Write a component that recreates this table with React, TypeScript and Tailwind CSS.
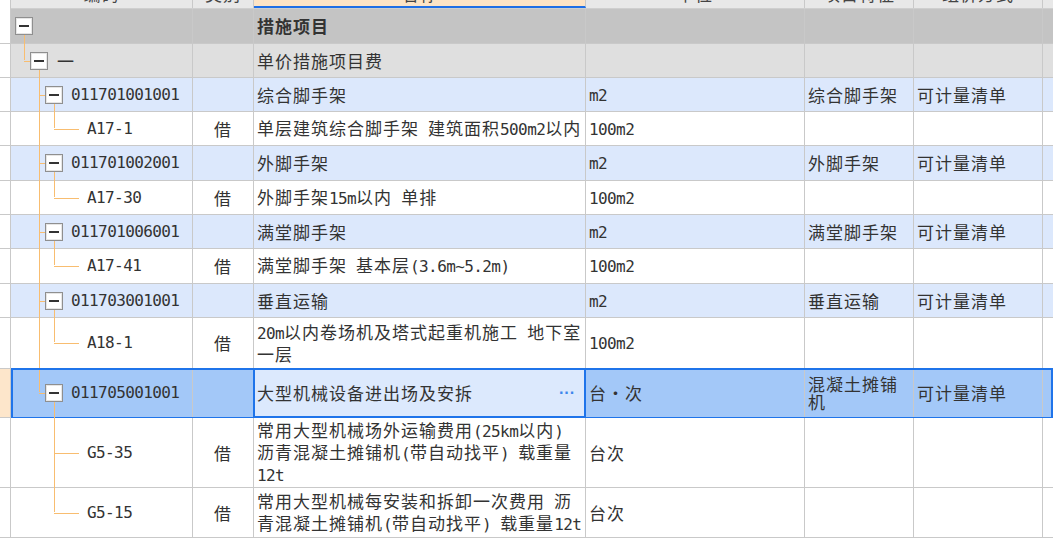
import React from "react"

type Row = {
  level: 0 | 1 | 2 | 3
  code: string
  kind?: string
  name: string[]
  unit?: string
  feature?: string[]
  method?: string
  h: string
  bg: string
  bold?: boolean
  selected?: boolean
  trunk?: "full" | "half" | "from-box"
  root?: "from-box" | "half"
  branch?: "from-box" | "half" | "full"
}

const rows: Row[] = [
  { level: 0, code: "", name: ["措施项目"], h: "h-[35px]", bg: "bg-[#c4c4c4]", bold: true, root: "from-box" },
  { level: 1, code: "一", name: ["单价措施项目费"], h: "h-[34px]", bg: "bg-[#dfdfdf]", root: "half", trunk: "from-box" },
  { level: 2, code: "011701001001", name: ["综合脚手架"], unit: "m2", feature: ["综合脚手架"], method: "可计量清单", h: "h-[34px]", bg: "bg-[#dce8fc]", trunk: "full", branch: "from-box" },
  { level: 3, code: "A17-1", kind: "借", name: ["单层建筑综合脚手架 建筑面积500m2以内"], unit: "100m2", h: "h-[34px]", bg: "bg-white", trunk: "full", branch: "half" },
  { level: 2, code: "011701002001", name: ["外脚手架"], unit: "m2", feature: ["外脚手架"], method: "可计量清单", h: "h-[35px]", bg: "bg-[#dce8fc]", trunk: "full", branch: "from-box" },
  { level: 3, code: "A17-30", kind: "借", name: ["外脚手架15m以内 单排"], unit: "100m2", h: "h-[34px]", bg: "bg-white", trunk: "full", branch: "half" },
  { level: 2, code: "011701006001", name: ["满堂脚手架"], unit: "m2", feature: ["满堂脚手架"], method: "可计量清单", h: "h-[34px]", bg: "bg-[#dce8fc]", trunk: "full", branch: "from-box" },
  { level: 3, code: "A17-41", kind: "借", name: ["满堂脚手架 基本层(3.6m~5.2m)"], unit: "100m2", h: "h-[35px]", bg: "bg-white", trunk: "full", branch: "half" },
  { level: 2, code: "011703001001", name: ["垂直运输"], unit: "m2", feature: ["垂直运输"], method: "可计量清单", h: "h-[34px]", bg: "bg-[#dce8fc]", trunk: "full", branch: "from-box" },
  { level: 3, code: "A18-1", kind: "借", name: ["20m以内卷场机及塔式起重机施工 地下室", "一层"], unit: "100m2", h: "h-[51px]", bg: "bg-white", trunk: "full", branch: "half" },
  { level: 2, code: "011705001001", name: ["大型机械设备进出场及安拆"], unit: "台・次", feature: ["混凝土摊铺", "机"], method: "可计量清单", h: "h-[49px]", bg: "bg-[#a3c8f8]", selected: true, trunk: "half", branch: "from-box" },
  { level: 3, code: "G5-35", kind: "借", name: ["常用大型机械场外运输费用(25km以内)", "沥青混凝土摊铺机(带自动找平) 载重量", "12t"], unit: "台次", h: "h-[70px]", bg: "bg-white", branch: "full" },
  { level: 3, code: "G5-15", kind: "借", name: ["常用大型机械每安装和拆卸一次费用 沥", "青混凝土摊铺机(带自动找平) 载重量12t"], unit: "台次", h: "h-[50px]", bg: "bg-white", branch: "half" },
]

const mono = "font-['DejaVu_Sans_Mono',monospace] text-[16px] tracking-[-0.6px]"

function Mixed({ s }: { s: string }) {
  const parts = s.split(/([\x20-\x7e]+)/)
  return (
    <>
      {parts.map((p, i) =>
        /^[\x20-\x7e]+$/.test(p) ? (
          <span key={i} className={`${mono} whitespace-pre`}>
            {p}
          </span>
        ) : (
          <span key={i}>{p}</span>
        )
      )}
    </>
  )
}

function Lines({ lines, leading = "leading-[20px]" }: { lines: string[]; leading?: string }) {
  return (
    <div className={`${leading} whitespace-nowrap`}>
      {lines.map((l, i) => (
        <div key={i}>
          <Mixed s={l} />
        </div>
      ))}
    </div>
  )
}

function Box({ left }: { left: string }) {
  return (
    <div className={`absolute ${left} top-1/2 -mt-[9px] w-[18px] h-[18px] border border-[#8f8f8f] bg-white flex items-center justify-center shadow-[inset_0_0_0_1px_#e6e6e6]`}>
      <div className="w-[10px] h-[2px] bg-[#333]" />
    </div>
  )
}

const line = "absolute bg-[#f8bd70]"

function TreeCell({ r }: { r: Row }) {
  return (
    <div className="relative w-[182px] shrink-0 h-full border-r border-b border-[#c9c9c9]">
      {r.root === "from-box" && <div className={`${line} left-[13px] w-px top-1/2 mt-[9px] -bottom-px`} />}
      {r.root === "half" && (
        <>
          <div className={`${line} left-[13px] w-px -top-px h-1/2`} />
          <div className={`${line} left-[13px] w-[6px] h-px top-1/2`} />
        </>
      )}
      {r.trunk === "full" && <div className={`${line} left-[28px] w-px -top-px -bottom-px`} />}
      {r.trunk === "half" && <div className={`${line} left-[28px] w-px -top-px h-1/2`} />}
      {r.trunk === "from-box" && <div className={`${line} left-[28px] w-px top-1/2 mt-[9px] -bottom-px`} />}
      {r.level === 2 && <div className={`${line} left-[28px] w-[6px] h-px top-1/2`} />}
      {r.level === 2 && r.branch === "from-box" && <div className={`${line} left-[43px] w-px top-1/2 mt-[9px] -bottom-px`} />}
      {r.level === 3 && (
        <>
          <div className={`${line} left-[43px] w-px -top-px ${r.branch === "full" ? "-bottom-px" : "h-1/2"}`} />
          <div className={`${line} left-[43px] w-[25px] h-px top-1/2`} />
        </>
      )}
      {r.level === 0 && <Box left="left-[4px]" />}
      {r.level === 1 && <Box left="left-[19px]" />}
      {r.level === 2 && <Box left="left-[34px]" />}
      <div
        className={`absolute top-1/2 -translate-y-1/2 whitespace-nowrap ${
          r.level === 1 ? "left-[46px]" : r.level === 2 ? "left-[60px]" : "left-[76px]"
        } ${r.level === 1 ? "text-[17px]" : mono}`}
      >
        {r.code}
      </div>
    </div>
  )
}

function DataRow({ r }: { r: Row }) {
  return (
    <div className={`flex ${r.h}`}>
      <div className={`w-[11px] shrink-0 border-r border-b border-[#c9c9c9] ${r.selected ? "bg-[#fde6cb]" : "bg-white"}`} />
      <div className={`relative flex flex-1 ${r.bg}`}>
        <TreeCell r={r} />
        <div className="w-[61px] shrink-0 border-r border-b border-[#c9c9c9] flex items-center justify-center">{r.kind}</div>
        <div
          className={`relative w-[332px] shrink-0 border-r border-b border-[#c9c9c9] flex items-center pl-[3px] ${
            r.selected ? "bg-[#dce9fd]" : ""
          } ${r.bold ? "font-bold" : ""}`}
        >
          <Lines lines={r.name} />
          {r.selected && (
            <>
              <div className="absolute -left-px -top-px -right-px -bottom-px border-2 border-[#1f74ea]" />
              <div className="absolute right-[10px] top-1/2 -translate-y-1/2 text-[#3d86ec] text-[16px] tracking-[0px] font-bold font-['Liberation_Sans',sans-serif]">···</div>
            </>
          )}
        </div>
        <div className="w-[219px] shrink-0 border-r border-b border-[#c9c9c9] flex items-center pl-[3px]">
          {r.unit && (r.selected ? <span className="text-[17px]">台・次</span> : <Lines lines={[r.unit]} />)}
        </div>
        <div className="w-[109px] shrink-0 border-r border-b border-[#c9c9c9] flex items-center pl-[3px]">
          {r.feature && <Lines lines={r.feature} leading="leading-[18px]" />}
        </div>
        <div className="w-[129px] shrink-0 border-r border-b border-[#c9c9c9] flex items-center pl-[3px]">{r.method}</div>
        <div className="flex-1 border-b border-[#c9c9c9]" />
        {r.selected && <div className="absolute -top-px -bottom-px left-0 right-0 border-2 border-[#1f74ea] pointer-events-none" />}
      </div>
    </div>
  )
}

const headers = [
  { w: "w-[182px]", t: "编码", bg: "" },
  { w: "w-[61px]", t: "类别", bg: "" },
  { w: "w-[332px]", t: "名称", bg: "bg-[#fde4c6] border-b-2 border-b-[#1f6fe6]" },
  { w: "w-[219px]", t: "单位", bg: "" },
  { w: "w-[109px]", t: "项目特征", bg: "" },
  { w: "w-[129px]", t: "组价方式", bg: "" },
]

export default function App() {
  return (
    <div className="w-[1053px] h-[555px] overflow-hidden bg-white text-[#333] text-[17px] tracking-[1px] font-['Noto_Sans_CJK_SC',sans-serif]">
      <div className="flex h-[9px]">
        <div className="w-[11px] shrink-0 border-r border-[#c9c9c9] bg-white" />
        <div className="flex flex-1 bg-[#e8e8e8] border-b border-[#cfcfcf]">
          {headers.map((h) => (
            <div key={h.t} className={`${h.w} ${h.bg} shrink-0 border-r border-[#c9c9c9] overflow-hidden flex justify-center`}>
              <span className="leading-[18px] -mt-[15px] text-[#444]">{h.t}</span>
            </div>
          ))}
          <div className="flex-1" />
        </div>
      </div>
      {rows.map((r, i) => (
        <DataRow key={i} r={r} />
      ))}
    </div>
  )
}
